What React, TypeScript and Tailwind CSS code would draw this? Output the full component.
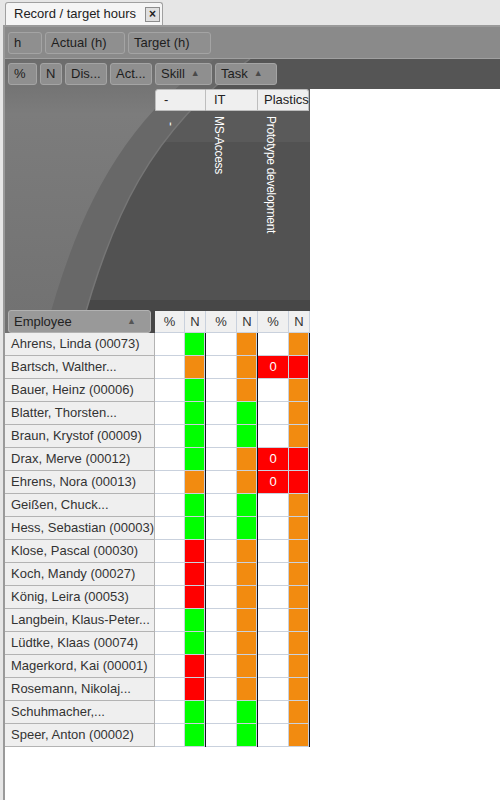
import React from "react";

type Mark = "g" | "o" | "r" | "z";

const fill: Record<Mark, string> = {
  g: "bg-[#00ff00]",
  o: "bg-[#f28b10]",
  r: "bg-[#ff0000]",
  z: "bg-[#ff0000]",
};

const employees: { name: string; m: [Mark, Mark, Mark] }[] = [
  { name: "Ahrens, Linda (00073)", m: ["g", "o", "o"] },
  { name: "Bartsch, Walther...", m: ["o", "o", "z"] },
  { name: "Bauer, Heinz (00006)", m: ["g", "o", "o"] },
  { name: "Blatter, Thorsten...", m: ["g", "g", "o"] },
  { name: "Braun, Krystof (00009)", m: ["g", "g", "o"] },
  { name: "Drax, Merve (00012)", m: ["g", "o", "z"] },
  { name: "Ehrens, Nora (00013)", m: ["o", "o", "z"] },
  { name: "Geißen, Chuck...", m: ["g", "g", "o"] },
  { name: "Hess, Sebastian (00003)", m: ["g", "g", "o"] },
  { name: "Klose, Pascal (00030)", m: ["r", "o", "o"] },
  { name: "Koch, Mandy (00027)", m: ["r", "o", "o"] },
  { name: "König, Leira (00053)", m: ["r", "o", "o"] },
  { name: "Langbein, Klaus-Peter...", m: ["g", "o", "o"] },
  { name: "Lüdtke, Klaas (00074)", m: ["g", "o", "o"] },
  { name: "Magerkord, Kai (00001)", m: ["r", "o", "o"] },
  { name: "Rosemann, Nikolaj...", m: ["r", "o", "o"] },
  { name: "Schuhmacher,...", m: ["g", "g", "o"] },
  { name: "Speer, Anton (00002)", m: ["g", "g", "o"] },
];

const pctWidths = ["w-[30px]", "w-[31px]", "w-[31px]"];

function ToolButton({ label, w, arrow }: { label: string; w: string; arrow?: boolean }) {
  return (
    <div
      className={`${w} h-[22px] shrink-0 flex items-center gap-[6px] pl-[5px] rounded-[3px] bg-[#8f8f8f] border border-[#a4a4a4] text-[#1e1e1e] whitespace-nowrap`}
    >
      <span>{label}</span>
      {arrow && <span className="text-[9px] text-[#4a4a4a]">▲</span>}
    </div>
  );
}

function Backdrop() {
  return (
    <svg className="absolute inset-0" width="495" height="274" viewBox="0 0 495 274">
      <defs>
        <linearGradient id="lite" x1="0" y1="0" x2="0" y2="1">
          <stop offset="0" stopColor="#6c6c6c" />
          <stop offset="0.2" stopColor="#7c7c7c" />
          <stop offset="1" stopColor="#717171" />
        </linearGradient>
      </defs>
      <rect x="0" y="0" width="495" height="274" fill="#525252" />
      <rect x="0" y="0" width="495" height="30" fill="#555555" />
      <rect x="0" y="30" width="305" height="53" fill="#5a5a5a" />
      <rect x="0" y="241" width="305" height="33" fill="#474747" />
      <path d="M0,0 L245,0 C145,71 105,161 75,274 L0,274 Z" fill="#686868" />
      <path d="M245,0 C145,71 105,161 75,274" fill="none" stroke="#767676" strokeWidth="1.5" />
      <path d="M0,0 L210,0 C115,61 70,161 40,274 L0,274 Z" fill="url(#lite)" />
      <rect x="305" y="30" width="190" height="244" fill="#ffffff" />
    </svg>
  );
}

export default function App() {
  return (
    <div className="w-[500px] h-[800px] bg-[#e6e6e6] flex flex-col overflow-hidden font-['Liberation_Sans',Arial,sans-serif] text-[13px] text-[#222]">
      {/* tab strip */}
      <div className="h-[25px] shrink-0 flex items-end pl-[5px]">
        <div className="h-[23px] w-[158px] flex items-center justify-between pl-[8px] pr-[2px] bg-[#f5f5f5] border border-b-0 border-[#a0a0a0] rounded-t-[3px]">
          <span>Record / target hours</span>
          <span className="w-[15px] h-[15px] border border-[#8c8c8c] bg-[#e0e0e0] flex items-center justify-center text-[12px] font-bold leading-none">
            ×
          </span>
        </div>
      </div>

      <div className="flex-1 ml-[3px] border-l-2 border-t-2 border-[#9a9a9a] bg-white flex flex-col">
        {/* measure toolbar */}
        <div className="h-[32px] shrink-0 bg-[#8a8a8a] border-b border-[#a0a0a0] flex items-center gap-[3px] pl-[3px]">
          <ToolButton label="h" w="w-[34px]" />
          <ToolButton label="Actual (h)" w="w-[80px]" />
          <ToolButton label="Target (h)" w="w-[83px]" />
        </div>

        {/* pivot area */}
        <div className="relative h-[274px] shrink-0 flex flex-col">
          <Backdrop />
          <div className="relative h-[30px] flex items-center gap-[3px] pl-[3px]">
            <ToolButton label="%" w="w-[29px]" />
            <ToolButton label="N" w="w-[22px]" />
            <ToolButton label="Dis..." w="w-[42px]" />
            <ToolButton label="Act..." w="w-[42px]" />
            <ToolButton label="Skill" w="w-[57px]" arrow />
            <ToolButton label="Task" w="w-[62px]" arrow />
          </div>

          <div className="relative h-[22px] flex">
            <div className="w-[150px] shrink-0" />
            <div className="w-[51px] bg-[#efefef] border border-[#bdbdbd] rounded-tl-[3px] pl-[8px] flex items-center">-</div>
            <div className="w-[52px] bg-[#efefef] border border-l-0 border-[#bdbdbd] pl-[8px] flex items-center">IT</div>
            <div className="w-[51px] bg-[#efefef] border border-l-0 border-[#bdbdbd] rounded-tr-[3px] pl-[6px] flex items-center">Plastics</div>
          </div>

          <div className="relative flex-1 flex pt-[5px] text-white text-[12px] leading-[12px] tracking-[-0.3px]">
            <div className="w-[150px] shrink-0" />
            <div className="w-[51px] pl-[10px]">
              <span className="[writing-mode:vertical-rl]">-</span>
            </div>
            <div className="w-[52px] pl-[7px]">
              <span className="[writing-mode:vertical-rl]">MS-Access</span>
            </div>
            <div className="w-[52px] pl-[7px]">
              <span className="[writing-mode:vertical-rl]">Prototype development</span>
            </div>
          </div>

          {/* column header row */}
          <div className="relative h-[23px] flex">
            <div className="w-[150px] shrink-0 pl-[3px] pr-[4px]">
              <div className="h-[23px] flex items-center justify-between pl-[5px] pr-[14px] rounded-[3px] bg-[#999999] border border-[#b2b2b2] text-[#222]">
                <span>Employee</span>
                <span className="text-[9px] text-[#555]">▲</span>
              </div>
            </div>
            {pctWidths.map((w, i) => (
              <React.Fragment key={i}>
                <div className={`${w} mt-px bg-[#f0f0f0] border-r border-b border-[#c9d1dd] flex items-center justify-center text-[#333]`}>%</div>
                <div className="w-[21px] mt-px bg-[#f0f0f0] border-r border-b border-[#c9d1dd] flex items-center justify-center text-[#333]">N</div>
              </React.Fragment>
            ))}
          </div>
        </div>

        {/* data rows */}
        {employees.map((e) => (
          <div key={e.name} className="h-[23px] shrink-0 flex">
            <div className="w-[150px] shrink-0 bg-[#efefef] border-r border-b border-[#b3b3b3] pl-[6px] flex items-center text-[#333] whitespace-nowrap overflow-hidden">
              {e.name}
            </div>
            {e.m.map((m, i) => (
              <React.Fragment key={i}>
                <div
                  className={`${pctWidths[i]} border-r border-b border-[#c9d1dd] flex items-center justify-center text-white ${m === "z" ? "bg-[#ff0000]" : "bg-white"}`}
                >
                  {m === "z" ? "0" : ""}
                </div>
                <div className={`w-[20px] border-r border-b border-[#c9d1dd] ${fill[m]}`} />
                <div className="w-px bg-[#10101c]" />
              </React.Fragment>
            ))}
          </div>
        ))}
      </div>
    </div>
  );
}
